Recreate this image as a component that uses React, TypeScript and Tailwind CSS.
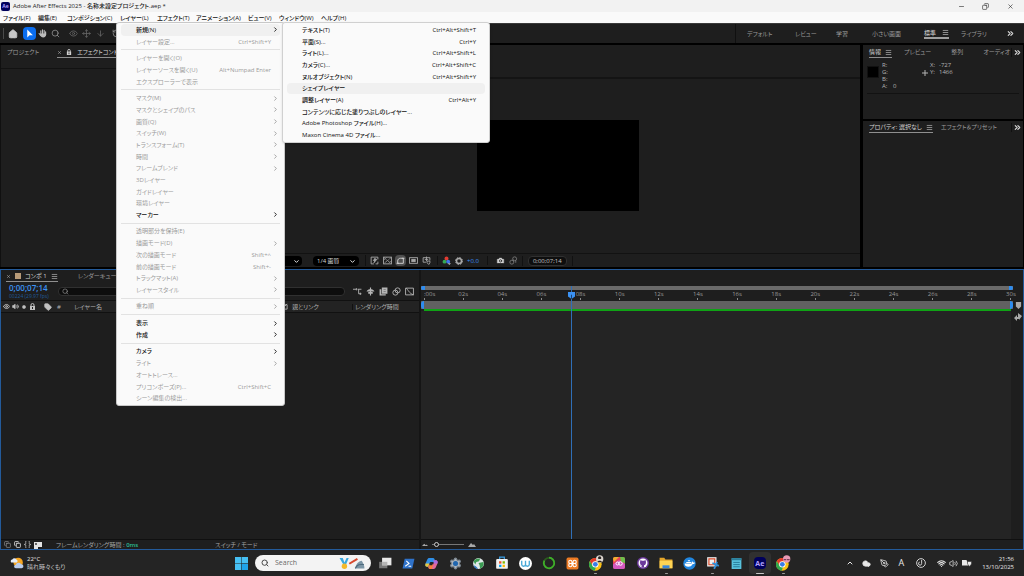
import { Fragment, type ReactNode } from 'react'
import {
  Camera,
  ChevronDown,
  ChevronRight,
  ChevronUp,
  ChevronsRight,
  Circle,
  Cloud,
  Copy,
  Eye,
  Home,
  Menu as MenuIcon,
  Minus,
  Move,
  ArrowDown,
  PenTool,
  RotateCcw,
  Search,
  Settings,
  Tag,
  Volume2,
  Wifi,
  X,
} from 'lucide-react'

interface MenuEntry {
  label: string
  shortcut?: string
  sub?: boolean
  enabled?: boolean
  active?: boolean
}

const layerMenu: MenuEntry[][] = [
  [
    { label: '新規(N)', sub: true, enabled: true, active: true },
    { label: 'レイヤー設定...', shortcut: 'Ctrl+Shift+Y' },
  ],
  [
    { label: 'レイヤーを開く(O)' },
    { label: 'レイヤーソースを開く(U)', shortcut: 'Alt+Numpad Enter' },
    { label: 'エクスプローラーで表示' },
  ],
  [
    { label: 'マスク(M)', sub: true },
    { label: 'マスクとシェイプのパス', sub: true },
    { label: '画質(Q)', sub: true },
    { label: 'スイッチ(W)', sub: true },
    { label: 'トランスフォーム(T)', sub: true },
    { label: '時間', sub: true },
    { label: 'フレームブレンド', sub: true },
    { label: '3Dレイヤー' },
    { label: 'ガイドレイヤー' },
    { label: '環境レイヤー' },
    { label: 'マーカー', sub: true, enabled: true },
  ],
  [
    { label: '透明部分を保持(E)' },
    { label: '描画モード(D)', sub: true },
    { label: '次の描画モード', shortcut: 'Shift+^' },
    { label: '前の描画モード', shortcut: 'Shift+-' },
    { label: 'トラックマット(A)', sub: true },
    { label: 'レイヤースタイル', sub: true },
  ],
  [{ label: '重ね順', sub: true }],
  [
    { label: '表示', sub: true, enabled: true },
    { label: '作成', sub: true, enabled: true },
  ],
  [
    { label: 'カメラ', sub: true, enabled: true },
    { label: 'ライト', sub: true },
    { label: 'オートトレース...' },
    { label: 'プリコンポーズ(P)...', shortcut: 'Ctrl+Shift+C' },
    { label: 'シーン編集の検出...' },
  ],
]

const newMenu: MenuEntry[] = [
  { label: 'テキスト(T)', shortcut: 'Ctrl+Alt+Shift+T', enabled: true },
  { label: '平面(S)...', shortcut: 'Ctrl+Y', enabled: true },
  { label: 'ライト(L)...', shortcut: 'Ctrl+Alt+Shift+L', enabled: true },
  { label: 'カメラ(C)...', shortcut: 'Ctrl+Alt+Shift+C', enabled: true },
  { label: 'ヌルオブジェクト(N)', shortcut: 'Ctrl+Alt+Shift+Y', enabled: true },
  { label: 'シェイプレイヤー', enabled: true, active: true },
  { label: '調整レイヤー(A)', shortcut: 'Ctrl+Alt+Y', enabled: true },
  { label: 'コンテンツに応じた塗りつぶしのレイヤー...', enabled: true },
  { label: 'Adobe Photoshop ファイル(H)...', enabled: true },
  { label: 'Maxon Cinema 4D ファイル...', enabled: true },
]

const menuBar = [
  { label: 'ファイル(F)', width: 'w-[35px]' },
  { label: '編集(E)', width: 'w-[29px]' },
  { label: 'コンポジション(C)', width: 'w-[53px]' },
  { label: 'レイヤー(L)', width: 'w-[37px]' },
  { label: 'エフェクト(T)', width: 'w-[39px]' },
  { label: 'アニメーション(A)', width: 'w-[52px]' },
  { label: 'ビュー(V)', width: 'w-[31px]' },
  { label: 'ウィンドウ(W)', width: 'w-[42px]' },
  { label: 'ヘルプ(H)', width: 'w-[30px]' },
]

const seconds = Array.from({ length: 16 }, (_, i) => i * 2)
const playhead = 7.5

function MenuRow({ item }: { item: MenuEntry }) {
  return (
    <li className="flex min-h-0 flex-1 px-1">
      <button
        className={`flex w-full items-center justify-between rounded-sm pr-[9px] pl-[15px] ${item.enabled ? 'font-medium text-[#111]' : 'text-[#9a9a9a]'} ${item.active ? 'bg-[#f0f0f0]' : ''}`}
      >
        <span>{item.label}</span>
        {item.shortcut && <span>{item.shortcut}</span>}
        {item.sub && <ChevronRight className="-mr-2 size-[7px]" strokeWidth={3} />}
      </button>
    </li>
  )
}

function Tab({ children, active = false, className = '' }: { children: ReactNode; active?: boolean; className?: string }) {
  return (
    <button
      className={`flex h-[11px] shrink-0 items-center gap-1 border-b ${active ? 'border-[#8f8f8f] text-[#d2d2d2]' : 'border-transparent text-[#9b9b9b]'} ${className}`}
    >
      {children}
      {active && <MenuIcon className="size-[7px]" />}
    </button>
  )
}

function Overflow() {
  return (
    <button aria-label="more" className="shrink-0 text-[#d8d8d8]">
      <ChevronsRight className="size-[9px]" strokeWidth={3} />
    </button>
  )
}

function LockIcon({ className = '' }: { className?: string }) {
  return (
    <svg viewBox="0 0 12 14" className={className}>
      <path d="M3 7V4a3 3 0 0 1 6 0v3" fill="none" stroke="currentColor" strokeWidth="2" />
      <path d="M1 6h10v8H1z" fill="currentColor" />
      <path d="M5 8h2v4H5z" fill="#1e1e1e" />
    </svg>
  )
}

function Layers() {
  return (
    <nav className="absolute top-[22px] left-[116px] z-20 flex h-[384px] w-[169px] flex-col rounded-[3px] border border-[#c8c8c8] bg-[#fafafa] py-px text-[6px]">
      {layerMenu.map((group, i) => (
        <Fragment key={i}>
          {i > 0 && <hr className="my-[2px] mr-1 ml-1 border-[#e2e2e2]" />}
          <ul className="flex flex-col" style={{ flex: group.length }}>
            {group.map((item) => (
              <MenuRow key={item.label} item={item} />
            ))}
          </ul>
        </Fragment>
      ))}
    </nav>
  )
}

function NewLayerMenu() {
  return (
    <nav className="absolute top-[22px] left-[282px] z-30 flex h-[121px] w-[208px] flex-col rounded-[3px] border border-[#d0d0d0] bg-[#fafafa] py-px text-[6px] shadow-sm">
      <ul className="flex flex-1 flex-col">
        {newMenu.map((item) => (
          <MenuRow key={item.label} item={item} />
        ))}
      </ul>
    </nav>
  )
}

function Toolbar() {
  return (
    <div className="flex h-5 shrink-0 items-center border-t border-[#3a3a3a] bg-[#1e1e1e] text-[#9a9a9a]">
      <div className="flex flex-1 items-center">
        <span className="ml-[3px] h-[11px] w-px bg-[#4a4a4a]" />
        <button aria-label="home" className="ml-1 text-[#c8c8c8]">
          <Home className="size-[10px]" fill="currentColor" />
        </button>
        <button aria-label="select" className="ml-[5px] rounded-sm bg-[#0b6ef0] p-[2px] text-white">
          <svg viewBox="0 0 16 16" className="size-[9px]" fill="currentColor">
            <path d="M4 1v14l4-4h6z" />
          </svg>
        </button>
        <button aria-label="hand" className="ml-[2px] text-[#bdbdbd]">
          <svg viewBox="0 0 16 16" className="size-[9px]" fill="none" stroke="currentColor" strokeWidth="2" strokeLinecap="round">
            <path d="M5 3v6M8 1.500V9M11 2.500V9M13.500 5v5M2 8l3 4" />
            <path d="M5 9h8.500c0 4-2 5-4.500 5s-3.500-2-4-4z" fill="currentColor" />
          </svg>
        </button>
        <button aria-label="zoom" className="ml-1">
          <Search className="size-[9px]" />
        </button>
        <button aria-label="orbit" className="ml-[9px] text-[#6a6a6a]">
          <Eye className="size-[9px]" />
        </button>
        <button aria-label="pan" className="ml-1 text-[#6a6a6a]">
          <Move className="size-[9px]" />
        </button>
        <button aria-label="dolly" className="ml-[5px] text-[#6a6a6a]">
          <ArrowDown className="size-[9px]" />
        </button>
        <button aria-label="rotate" className="ml-[7px]">
          <RotateCcw className="size-[9px]" />
        </button>
        <button aria-label="pen" className="ml-2">
          <PenTool className="size-[9px]" />
        </button>
      </div>
      <div className="flex h-full w-[289px] items-center border-l border-[#101010] pl-[11px] text-[6px]">
        <button className="w-12 text-left">デフォルト</button>
        <button className="w-[41px] text-left">レビュー</button>
        <button className="w-9 text-left">学習</button>
        <button className="w-[52px] text-left">小さい画面</button>
        <button className="mr-3 flex h-[11px] w-[25px] items-center justify-between border-b-2 border-[#a0a0a0] text-[#dedede]">
          標準
          <MenuIcon className="size-[7px]" />
        </button>
        <button className="flex-1 text-left">ライブラリ</button>
        <span className="mr-[9px] flex">
          <Overflow />
        </span>
      </div>
    </div>
  )
}

function CompositionPanel() {
  return (
    <section className="flex min-w-0 flex-1 flex-col bg-[#1e1e1e]">
      <div className="h-[34px] border-b-2 border-[#141414]" />
      <div className="flex flex-1 items-center justify-center pb-px">
        <div className="h-[91px] w-[162px] bg-black" />
      </div>
      <div className="flex h-[14px] items-center border-t border-[#121212] pl-2 text-[#a8a8a8]">
        <label className="relative flex w-[38px]">
          <select aria-label="magnification" className="h-[10px] w-full appearance-none rounded-sm bg-black pl-1 text-[6px] leading-none">
            <option>50%</option>
          </select>
          <ChevronDown className="absolute top-[2px] right-[2px] size-[7px] text-white" strokeWidth={3} />
        </label>
        <label className="relative ml-[11px] flex w-[46px]">
          <select aria-label="resolution" className="h-[10px] w-full appearance-none rounded-sm bg-black pl-1 text-[6px] leading-none text-[#d6d6d6]">
            <option>1/4 画質</option>
          </select>
          <ChevronDown className="absolute top-[2px] right-[3px] size-[7px] text-white" strokeWidth={3} />
        </label>
        <div className="ml-[6px] flex items-center gap-[2px] border-l border-[#111] pl-[3px]">
          <button aria-label="fast preview" className="grid size-[11px] place-items-center">
            <svg viewBox="0 0 16 16" className="size-[9px]" fill="none" stroke="currentColor" strokeWidth="1.6">
              <path d="M14 6V2H2v12h5" />
              <path d="M9 4 6 8h3l-2 4 5-6H9z" fill="currentColor" />
              <path d="M10 14h4v-4" />
            </svg>
          </button>
          <button aria-label="transparency" className="grid size-[11px] place-items-center">
            <svg viewBox="0 0 16 16" className="size-[9px]" fill="none" stroke="currentColor" strokeWidth="1.6">
              <rect x="1" y="2" width="14" height="12" />
              <path d="m2 3 12 10M14 3 2 13M6 3l-4 4M10 13l4-4" strokeDasharray="2 1" />
            </svg>
          </button>
          <button aria-label="mask" className="grid size-[11px] place-items-center rounded-sm bg-[#505050] text-[#d8d8d8]">
            <svg viewBox="0 0 16 16" className="size-[9px]" fill="none" stroke="currentColor" strokeWidth="1.6">
              <path d="M3 13V9c0-3 2-5 5-5h5v9zM1 13h4M11 4h4" />
            </svg>
          </button>
          <button aria-label="region" className="grid size-[11px] place-items-center">
            <svg viewBox="0 0 16 16" className="size-[9px]" fill="none" stroke="currentColor" strokeWidth="1.6">
              <rect x="1" y="3" width="14" height="10" />
              <rect x="5" y="6" width="6" height="4" fill="currentColor" />
            </svg>
          </button>
          <button aria-label="guides" className="grid size-[11px] place-items-center">
            <svg viewBox="0 0 16 16" className="size-[9px]" fill="none" stroke="currentColor" strokeWidth="1.6">
              <path d="M7 11H2V3h12v5M8 1v8M5 6h6M9 9h5v3l-2 3-3-3z" />
            </svg>
          </button>
        </div>
        <div className="ml-[5px] flex items-center gap-1 border-l border-[#111] pl-1">
          <svg viewBox="0 0 16 16" className="size-[9px]">
            <circle cx="8" cy="4.500" r="3.500" fill="#e23b32" />
            <circle cx="4.500" cy="10" r="3.500" fill="#35a853" />
            <circle cx="11" cy="10" r="3.500" fill="#3f74e8" />
            <path d="M10 13h6l-3 3z" fill="#bbb" />
          </svg>
          <svg viewBox="0 0 16 16" className="size-[8px]" fill="none" stroke="currentColor">
            <circle cx="8" cy="8" r="5" strokeWidth="3" />
            <circle cx="8" cy="8" r="7" strokeWidth="2" strokeDasharray="3 2.500" />
          </svg>
          <button className="text-[6px] text-[#3b93f5]">+0.0</button>
        </div>
        <div className="ml-2 flex items-center gap-1 border-l border-[#111] pl-2">
          <Camera className="size-[9px] text-[#d0d0d0]" fill="currentColor" stroke="#1e1e1e" />
          <svg viewBox="0 0 16 16" className="size-[9px] text-[#777]" fill="none" stroke="currentColor" strokeWidth="1.600">
            <circle cx="10" cy="5" r="3.500" />
            <circle cx="5" cy="11" r="3.500" />
            <path d="m7 8 2-1M12 8v4" />
          </svg>
        </div>
        <div className="ml-1 border-x border-[#111] px-[5px]">
          <button className="block h-[10px] rounded-sm border border-[#303030] bg-[#0e0e0e] px-1 text-[6px] leading-none text-[#c6c6c6]">
            0;00;07;14
          </button>
        </div>
      </div>
    </section>
  )
}

function SidePanels() {
  return (
    <aside className="flex w-[161px] shrink-0 flex-col gap-[2px] pr-px text-[6px]">
      <section className="flex h-[74px] flex-col bg-[#1e1e1e]">
        <div className="flex items-center pt-[2px] pl-[6px]">
          <Tab active className="mr-3">情報</Tab>
          <Tab className="mr-5">プレビュー</Tab>
          <Tab className="mr-5">整列</Tab>
          <Tab className="flex-1">オーディオ</Tab>
          <span className="mr-px flex border-l border-[#101010] pl-px">
            <Overflow />
          </span>
        </div>
        <div className="mx-1 flex flex-1 text-[#b4b4b4]">
          <div className="mt-2 size-3 border border-[#111] bg-black" />
          <dl className="mt-1 ml-[3px] grid w-10 auto-rows-[7px] grid-cols-[7px_1fr] leading-[7px]">
            <dt>R:</dt>
            <dd />
            <dt>G:</dt>
            <dd />
            <dt>B:</dt>
            <dd />
            <dt>A:</dt>
            <dd className="pl-1">0</dd>
          </dl>
          <div className="flex flex-1 leading-[7px]">
            <svg viewBox="0 0 6 6" className="mt-3 size-[6px] self-start" stroke="currentColor">
              <path d="M3 0v6M0 3h6" />
            </svg>
            <dl className="mt-1 ml-[2px] grid auto-rows-[7px] grid-cols-[9px_1fr]">
              <dt>X:</dt>
              <dd>-727</dd>
              <dt>Y:</dt>
              <dd>1466</dd>
            </dl>
          </div>
        </div>
        <div className="mx-1 h-[26px] border-t border-[#121212]" />
      </section>
      <section className="flex-1 bg-[#1e1e1e]">
        <div className="flex items-center pt-px pl-[6px]">
          <Tab active className="mr-2">プロパティ: 選択なし</Tab>
          <Tab className="flex-1">エフェクト＆プリセット</Tab>
          <span className="mr-px flex border-l border-[#101010] pl-px">
            <Overflow />
          </span>
        </div>
      </section>
    </aside>
  )
}

function TimelineLeft() {
  return (
    <div className="flex w-[420px] shrink-0 flex-col border-r-2 border-[#151515]">
      <div className="flex h-[13px] items-center pl-[5px] text-[6px]">
        <Tab active className="mr-5">
          <X className="size-[5px]" />
          <span className="size-[6px] bg-[#b79a78]" />
          <span>コンポ 1</span>
        </Tab>
        <Tab>レンダーキュー</Tab>
      </div>
      <div className="flex h-[17px] items-center">
        <div className="w-[57px] pl-2">
          <div className="text-[8px] leading-[9px] font-semibold text-[#3b93f5]">0;00;07;14</div>
          <div className="text-[5px] leading-[8px] text-[#1f5a9c]">00224 (29.97 fps)</div>
        </div>
        <label className="flex h-[9px] w-[287px] items-center gap-1 rounded-sm border border-[#303030] bg-[#0d0d0d] pl-[3px] text-[#a8a8a8]">
          <Search className="size-[7px]" />
          <input aria-label="search layers" className="w-full bg-transparent text-[6px] outline-none" />
        </label>
        <div className="flex flex-1 items-center justify-between pr-[5px] pl-2 text-[#b5b5b5]">
          <svg viewBox="0 0 16 16" className="size-[9px]" fill="none" stroke="currentColor" strokeWidth="1.600">
            <path d="M0 4h6M8 4h7M6 2v4M10 4v8h5M13 10v4" />
          </svg>
          <svg viewBox="0 0 16 16" className="size-[9px]" fill="currentColor">
            <path d="M1 8c1-3 4-4 7-4s6 1 7 4zM7 1h2v14H7zM4 9h3v3H4zM9 9h3v3H9z" />
          </svg>
          <svg viewBox="0 0 16 16" className="size-[9px]" fill="currentColor">
            <path d="M5 1h10v11H5zM1 4h3v9h8v2H1z" />
            <path d="M8 4h4v1H8zM8 8h4v1H8z" fill="#555" />
          </svg>
          <svg viewBox="0 0 16 16" className="size-[9px]" fill="none" stroke="currentColor" strokeWidth="1.600">
            <circle cx="10" cy="6" r="4.500" />
            <circle cx="6" cy="10" r="4.500" />
          </svg>
          <svg viewBox="0 0 16 16" className="size-[9px]" fill="none" stroke="currentColor" strokeWidth="1.600">
            <path d="M1 2h14v12H1zM2 2c3 2 5 9 13 12" />
          </svg>
        </div>
      </div>
      <div className="flex h-[13px] items-center border-y border-[#111] bg-[#232323] text-[6px] text-[#b0b0b0]">
        <div className="flex w-[43px] items-center gap-[2px] pl-[2px] text-[#c0c0c0]">
          <Eye className="size-[7px]" strokeWidth={3} />
          <Volume2 className="size-[7px]" fill="currentColor" />
          <Circle className="mx-px size-[4px]" fill="currentColor" />
          <LockIcon className="size-[7px]" />
        </div>
        <Tag className="size-[8px] text-[#c0c0c0]" fill="currentColor" />
        <span className="ml-[5px] w-[17px]">#</span>
        <span className="w-[207px] text-left">レイヤー名</span>
        <svg viewBox="0 0 8 8" className="mr-1 size-[7px]" fill="none" stroke="currentColor">
          <path d="M1 2h6v5H1zM4 2v2l3-3" />
        </svg>
        <span className="w-[60px]">親とリンク</span>
        <span className="border-l border-[#111] pl-[2px]">レンダリング時間</span>
      </div>
      <div className="flex-1" />
      <div className="flex h-[10px] items-center border-t border-[#101010] text-[6px] text-[#a5a5a5]">
        <div className="flex w-[55px] items-center gap-[3px] pl-[3px]">
          <Copy className="size-[7px]" />
          <Copy className="size-[7px] text-[#d4d4d4]" strokeWidth={3} />
          <svg viewBox="0 0 8 8" className="size-[7px]" fill="none" stroke="currentColor">
            <path d="M3 0Q1 0 2 2t-2 2q3 0 2 2t1 2M5 0q2 0 1 2t2 2Q5 4 6 6T5 8" />
          </svg>
          <svg viewBox="0 0 8 8" className="size-[8px]" fill="#e4e4e4">
            <path d="M0 1h8v5H4v2H0z" />
            <path d="M1 2h2v2H1z" fill="#666" />
          </svg>
        </div>
        <span className="w-[159px]">
          フレームレンダリング時間 : <b className="font-semibold text-[#2bbd95]">0ms</b>
        </span>
        <button className="text-left">スイッチ / モード</button>
      </div>
    </div>
  )
}

function TimelineRight() {
  return (
    <div className="flex min-w-0 flex-1 flex-col">
      <div className="relative mr-[10px] flex flex-1 flex-col pt-4">
        <div className="flex h-1 items-center bg-[#6a6a6a]">
          <span className="h-full w-1 rounded-l-full bg-[#2d8cf0]" />
          <span className="ml-auto h-full w-1 rounded-r-full bg-[#2d8cf0]" />
        </div>
        <div className="mr-[2px] ml-[3px] flex h-[11px] justify-between text-[6px] leading-[8px] text-[#9a9a9a]">
          {seconds.map((s) => (
            <span key={s} className={`flex w-0 flex-col whitespace-nowrap ${s === 0 ? 'items-start' : 'items-center'}`}>
              {s === 0 ? ':00s' : `${String(s).padStart(2, '0')}s`}
              <i className="h-[2px] w-px bg-[#8a8a8a]" />
            </span>
          ))}
        </div>
        <div className="flex h-2 justify-between bg-[#616161]">
          <span className="w-[3px] rounded-l-sm bg-[#2d8cf0]" />
          <span className="w-[3px] rounded-r-sm bg-[#2d8cf0]" />
        </div>
        <div className="mr-[2px] ml-[3px] h-[2px] bg-[#0fa315]" />
        <div className="mr-[2px] flex-1 bg-[#242424]" />
        <div className="absolute inset-y-0 right-[2px] left-[3px]">
          <div className="absolute top-4 bottom-0 w-px bg-[#2f6fb8]" style={{ left: `${(playhead / 30) * 100}%` }}>
            <svg viewBox="0 0 8 8" className="absolute top-[6px] -left-[3px] size-[7px]">
              <path d="M0 0h8v5L4 8 0 5z" fill="#3b93f5" />
              <path d="M3.500 3v5h1V3z" fill="#123a66" />
            </svg>
          </div>
        </div>
        <div className="absolute top-8 -right-[9px] flex flex-col items-center gap-1 text-[#a9a9a9]">
          <svg viewBox="0 0 8 8" className="size-[7px]" fill="currentColor">
            <path d="M1 0h6v5L4 8 1 5z" />
          </svg>
          <svg viewBox="0 0 8 8" className="size-[8px]" fill="currentColor">
            <path d="M0 5 3 2v2h1V0l4 3-3 4V6H3v2z" />
          </svg>
        </div>
      </div>
      <div className="flex h-[10px] items-center gap-1 border-t border-[#101010] text-[#a8a8a8]">
        <svg viewBox="0 0 8 4" className="ml-px h-[3px] w-[6px]" fill="currentColor">
          <path d="M0 4 3 1l2 2 1-1 2 2z" />
        </svg>
        <input type="range" aria-label="timeline zoom" defaultValue={6} className="h-px w-[32px] appearance-none bg-[#777] [&::-webkit-slider-thumb]:size-[5px] [&::-webkit-slider-thumb]:appearance-none [&::-webkit-slider-thumb]:rounded-full [&::-webkit-slider-thumb]:border [&::-webkit-slider-thumb]:border-[#ccc] [&::-webkit-slider-thumb]:bg-[#1e1e1e]" />
        <svg viewBox="0 0 8 4" className="h-1 w-2" fill="currentColor">
          <path d="M0 4 3 0l2 2 1-1 2 3z" />
        </svg>
      </div>
    </div>
  )
}

function Chrome({ badge }: { badge: 'dark' | 'pink' }) {
  return (
    <svg viewBox="0 0 24 24" className="size-4">
      <circle cx="11" cy="14" r="9.500" fill="#fbc116" />
      <path d="M2.800 9.200A9.500 9.500 0 0 1 19.200 9.200L11 9.500 7 16z" fill="#e5392c" />
      <path d="M2.800 9.200 7 16.500 12 18l-2 5.500A9.500 9.500 0 0 1 2.800 9.200z" fill="#2da94f" />
      <circle cx="11" cy="14" r="4.800" fill="#fff" />
      <circle cx="11" cy="14" r="3.600" fill="#3a7de8" />
      <circle cx="17.500" cy="6" r="5.500" fill={badge === 'dark' ? '#ddd6d0' : '#e89ab5'} />
      <path
        d={badge === 'dark' ? 'M15 5c0-4 5-4 5 0l-1 1h-3zM14 11c0-3 7-3 7 0z' : 'M13 6h4v2h-4zM18 6h4v2h-4z'}
        fill={badge === 'dark' ? '#2a2422' : '#7a3f5c'}
      />
    </svg>
  )
}

const taskbarApps: { name: string; running?: boolean; active?: boolean; icon: ReactNode }[] = [
  {
    name: 'Task view',
    icon: (
      <svg viewBox="0 0 24 24" className="size-[14px]">
        <path d="M2 10h14v11H2z" fill="#777" />
        <path d="M7 3h16v13H7z" fill="#e8e8e8" />
        <path d="M7 10h9v6H7z" fill="#b5b5b5" />
      </svg>
    ),
  },
  {
    name: 'PowerShell',
    icon: (
      <svg viewBox="0 0 24 24" className="size-[13px]">
        <path d="M5 3h18l-4 18H1z" fill="#2f72c9" />
        <path d="m8 7 5 5-7 5M12 17h5" fill="none" stroke="#fff" strokeWidth="2" />
      </svg>
    ),
  },
  {
    name: 'Copilot',
    icon: (
      <svg viewBox="0 0 24 24" className="size-[13px]">
        <path d="M8 2h7c2 0 3 2 3 4l-2 4H9l-3 8H4c-3 0-4-3-3-6l3-7c1-2 2-3 4-3z" fill="#2f8fe8" />
        <path d="M1 12h7l-2 6H4c-4 0-4-3-3-6z" fill="#e8c83a" />
        <path d="M16 22H9c-2 0-3-2-3-4l2-4h7l3-8h2c3 0 4 3 3 6l-3 7c-1 2-2 3-4 3z" fill="#e2679a" />
        <path d="M8 14h7l-2 8H9c-3 0-3-4-1-8z" fill="#f5803a" />
        <path d="M15 6h5c3 0 4 3 3 6h-6z" fill="#a86ae0" />
        <path d="m10 9h5l-2 6H8z" fill="#242424" />
      </svg>
    ),
  },
  {
    name: 'Settings',
    icon: (
      <span className="relative grid place-items-center">
        <Settings className="size-[13px] text-[#7d8791]" fill="#aab3bb" />
        <span className="absolute size-[5px] rounded-full bg-[#1f66b0]" />
      </span>
    ),
  },
  {
    name: 'Earth',
    icon: (
      <svg viewBox="0 0 24 24" className="size-[13px]">
        <circle cx="12" cy="12" r="10" fill="#dfe8e8" />
        <path d="M3 8c3-5 8-6 12-5l-2 5-5 1-2 5zM12 11l9-2c2 6-2 11-6 12l-1-6z" fill="#3a9a52" />
        <path d="M3 15c3 1 6 3 8 7-4 0-7-3-8-7z" fill="#2e78c4" />
      </svg>
    ),
  },
  {
    name: 'Store',
    icon: (
      <svg viewBox="0 0 24 24" className="size-[14px]">
        <path d="M8 6V2h8v4" fill="none" stroke="#3aa0e8" strokeWidth="2" />
        <rect x="2" y="5" width="20" height="17" rx="2" fill="#f2f2f2" />
        <path d="M7 9h4v4H7z" fill="#f25022" />
        <path d="M13 9h4v4h-4z" fill="#7fba00" />
        <path d="M7 15h4v4H7z" fill="#00a4ef" />
        <path d="M13 15h4v4h-4z" fill="#ffb900" />
      </svg>
    ),
  },
  {
    name: 'W',
    icon: (
      <svg viewBox="0 0 24 24" className="size-[13px]">
        <circle cx="12" cy="12" r="12" fill="#fff" />
        <path d="M5 7v7q0 3 3.500 3t3.500-3V7v7q0 3 3.500 3t3.500-3V7" fill="none" stroke="#48a9d8" strokeWidth="2.500" />
      </svg>
    ),
  },
  {
    name: 'Ring',
    icon: (
      <svg viewBox="0 0 24 24" className="size-[14px]" fill="none" strokeWidth="3">
        <circle cx="12" cy="12" r="9" stroke="#2c5c1f" />
        <path d="M12 3a9 9 0 1 1-8 5" stroke="#3fae2a" />
      </svg>
    ),
  },
  {
    name: 'XAMPP',
    icon: (
      <svg viewBox="0 0 24 24" className="size-[13px]">
        <rect x="1" y="1" width="22" height="22" rx="3" fill="#ec7a23" />
        <path d="M11 12H8q-3 0-3-3t3-3 3 3v6q0 3-3 3t-3-3 3-3M13 12h3q3 0 3-3t-3-3-3 3v6q0 3 3 3t3-3-3-3M10 12h4" fill="none" stroke="#fff" strokeWidth="2" />
      </svg>
    ),
  },
  { name: 'Chrome', running: true, icon: <Chrome badge="dark" /> },
  {
    name: 'Creative Cloud',
    icon: (
      <svg viewBox="0 0 24 24" className="size-[12px]">
        <rect width="24" height="24" rx="4" fill="#e8425a" />
        <path d="M0 15 12 6l12 8v6a4 4 0 0 1-4 4H4a4 4 0 0 1-4-4z" fill="#d458c0" />
        <path d="M14 0h6a4 4 0 0 1 4 4v9l-8-4z" fill="#6ec04a" />
        <path d="M0 4a4 4 0 0 1 4-4h8L2 10z" fill="#f0b030" />
        <circle cx="9" cy="13" r="3" fill="none" stroke="#fff" strokeWidth="2" />
        <circle cx="15" cy="13" r="3.500" fill="none" stroke="#fff" strokeWidth="2" />
      </svg>
    ),
  },
  {
    name: 'GitHub Desktop',
    icon: (
      <svg viewBox="0 0 24 24" className="size-[12px]">
        <circle cx="12" cy="12" r="12" fill="#6c3a9c" />
        <circle cx="12" cy="12" r="9" fill="#fff" />
        <path d="M7 6l3 1.500h4L17 6l1 4c0 5-2 6-4 6.500V21h-4v-2c-2 0-3-1-4-2l4 .500v-1C7 16 6 15 6 10z" fill="#6c3a9c" />
      </svg>
    ),
  },
  {
    name: 'Explorer',
    running: true,
    icon: (
      <svg viewBox="0 0 24 24" className="size-[14px]">
        <path d="M1 3h8l2 3h12v15H1z" fill="#e5a62a" />
        <path d="M1 8h22v13H1z" fill="#ffd454" />
        <path d="M6 16h12v5H6z" fill="#3c86d8" />
      </svg>
    ),
  },
  {
    name: 'Docker',
    icon: (
      <svg viewBox="0 0 24 24" className="size-[13px]">
        <circle cx="12" cy="12" r="11.500" fill="#2186e0" />
        <path d="M3 12h13c0-2 0-3 1-4l2 2h3c0 2-2 3-4 3-2 4-5 5-8 5-4 0-7-2-7-6zM6 9h9v2H6zM9 6h4v2H9z" fill="#fff" />
      </svg>
    ),
  },
  {
    name: 'Snipping Tool',
    running: true,
    icon: (
      <svg viewBox="0 0 24 24" className="size-[14px]">
        <path d="M2 2h16v16H2z" fill="#f0f0f0" />
        <path d="M5 5h10v10H5z" fill="none" stroke="#d84a2a" strokeWidth="2" />
        <path d="m11 12 11 5M14 22l5-12" stroke="#2f8fd8" strokeWidth="3" />
      </svg>
    ),
  },
  {
    name: 'Notepad',
    icon: (
      <svg viewBox="0 0 24 24" className="size-[13px]">
        <rect x="3" y="2" width="18" height="20" rx="1" fill="#58c2dc" />
        <path d="M3 2h18v4H3z" fill="#2b7f9c" />
        <path d="M6 10h12M6 14h12M6 18h12" stroke="#1d6f8c" strokeWidth="1.500" />
      </svg>
    ),
  },
  {
    name: 'After Effects',
    running: true,
    active: true,
    icon: (
      <span className="grid size-[12px] place-items-center rounded-sm bg-[#00005b] text-[7px] leading-none font-bold text-[#b3a4ff]">Ae</span>
    ),
  },
  { name: 'Chrome profile', running: true, icon: <Chrome badge="pink" /> },
]

function Taskbar() {
  return (
    <footer className="grid h-[26px] shrink-0 grid-cols-[1fr_auto_1fr] items-center bg-[#242424] text-[6px] leading-[8px] text-[#e8e8e8]">
      <button className="flex items-center gap-[3px] pl-[10px] text-left">
        <svg viewBox="0 0 24 24" className="size-[14px]">
          <circle cx="14" cy="11" r="8" fill="#f5a623" />
          <path d="M2 11a3 3 0 0 1 2-5 4 4 0 0 1 7 0 3 3 0 0 1 1 5z" fill="#e4edf9" />
          <path d="M10 21a3 3 0 0 1 0-6 5 5 0 0 1 9-1 3.500 3.500 0 0 1 1 7z" fill="#b9cdee" />
        </svg>
        <span>
          22°C
          <br />
          <span className="text-[#c4c4c4]">晴れ時々くもり</span>
        </span>
      </button>
      <div className="flex items-center">
        <button aria-label="Start" className="grid w-6 place-items-center">
          <svg viewBox="0 0 24 24" className="size-[13px]" fill="#46c0f4">
            <path d="M0 0h11.500v11.500H0zM12.500 0H24v11.500H12.500zM0 12.500h11.500V24H0z" />
            <path d="M12.500 12.500H24V24H12.500z" fill="#1fa4ea" />
          </svg>
        </button>
        <label className="mx-[2px] flex h-4 w-[116px] items-center gap-[6px] rounded-full bg-[#f3f3f3] px-[6px] text-[#4a4a4a]">
          <Search className="size-[8px] shrink-0" strokeWidth={3} />
          <input aria-label="Search" placeholder="Search" className="w-full min-w-0 bg-transparent text-[7px] outline-none placeholder:text-[#6a6a6a]" />
          <svg viewBox="0 0 48 24" className="h-[13px] w-[26px] shrink-0">
            <path d="M1 2h6l3 8 4-8h4l-5 12H8z" fill="#38a8e0" />
            <circle cx="10" cy="17" r="5" fill="#f4b92a" />
            <path d="m18 11 15-9 2 3-15 9z" fill="#d8492e" />
            <path d="M30 21c1-8 6-13 12-14 3 5 5 9 5 14z" fill="#7d96a6" />
            <path d="M30 21c4-7 8-8 16-7" stroke="#4e6a7c" strokeWidth="2" fill="none" />
          </svg>
        </label>
        <ul className="grid w-[422px] grid-cols-18">
          {taskbarApps.map((app) => (
            <li key={app.name} className="flex justify-center">
              <button aria-label={app.name} className={`relative grid h-[22px] w-[22px] place-items-center rounded-sm ${app.active ? 'bg-[#303030]' : ''}`}>
                {app.icon}
                {app.running && (
                  <span className={`absolute bottom-0 h-px rounded-full ${app.active ? 'w-2 bg-[#c8c8c8]' : 'w-[3px] bg-[#9a9a9a]'}`} />
                )}
              </button>
            </li>
          ))}
        </ul>
      </div>
      <div className="flex items-center justify-end pr-[10px]">
        <ChevronUp className="mr-2 size-[8px]" strokeWidth={3} />
        <Cloud className="mr-[9px] size-[9px]" fill="currentColor" />
        <PenTool className="mr-[9px] size-[9px]" />
        <span className="mr-3 text-[9px]">A</span>
        <svg viewBox="0 0 16 16" className="mr-[11px] size-[10px]" fill="none" stroke="currentColor" strokeWidth="1.400">
          <circle cx="8" cy="8" r="7" />
          <path d="M9 3v6a2.500 2.500 0 1 1-3-2.500" />
        </svg>
        <Wifi className="mr-[3px] size-[9px]" strokeWidth={3} />
        <Volume2 className="mr-1 size-[9px]" />
        <svg viewBox="0 0 20 16" className="mr-[10px] h-[8px] w-[10px]" fill="currentColor">
          <path d="M0 2h9l4 11H0z" />
          <path d="M11 5h8v5l-4 5-4-5z" stroke="#242424" />
        </svg>
        <span className="text-right">
          21:56
          <br />
          13/10/2025
        </span>
      </div>
    </footer>
  )
}

export default function App() {
  return (
    <div className="relative flex min-h-screen flex-col overflow-hidden bg-black font-['Open_Sans','Noto_Sans_CJK_JP',sans-serif] leading-none whitespace-nowrap [font-feature-settings:'palt']">
      {/* Title bar */}
      <header className="flex h-3 shrink-0 items-center bg-[#f2f2f2] pl-px text-[7px] text-[#222]">
        <span className="mr-[3px] grid size-[9px] place-items-center rounded-[2px] bg-[#00005b] text-[5px] font-bold text-[#b3a4ff]">Ae</span>
        <h1 className="flex-1 text-[6px] font-medium">Adobe After Effects 2025 - 名称未設定プロジェクト.aep *</h1>
        <button aria-label="minimize" className="mr-[17px]">
          <Minus className="size-[7px]" />
        </button>
        <button aria-label="restore" className="mr-[18px]">
          <Copy className="size-[7px] -scale-x-100" />
        </button>
        <button aria-label="close" className="mr-[10px]">
          <X className="size-[7px]" />
        </button>
      </header>
      <nav className="flex h-[11px] shrink-0 items-center bg-[#fafafa] pl-[3px] text-[6px] font-medium text-[#111]">
        {menuBar.map((item) => (
          <button key={item.label} className={`text-left ${item.width}`}>
            {item.label}
          </button>
        ))}
      </nav>
      <Layers />
      <NewLayerMenu />

      <Toolbar />

      {/* Upper panels */}
      <div className="mt-[2px] flex h-[222px] shrink-0 gap-[3px]">
        <section className="w-[253px] shrink-0 border-l border-[#101010] bg-[#1e1e1e]">
          <div className="flex h-6 border-b border-[#121212] pt-[2px] pl-[6px] text-[6px]">
            <Tab className="w-[50px]">プロジェクト</Tab>
            <Tab active>
              <X className="size-[5px]" />
              <LockIcon className="size-[6px]" />
              <span className="pl-px">エフェクトコントロール</span>
            </Tab>
          </div>
        </section>
        <CompositionPanel />
        <SidePanels />
      </div>

      {/* Timeline */}
      <section className="mt-[2px] flex flex-1 border border-[#235a9a] bg-[#1e1e1e]">
        <TimelineLeft />
        <TimelineRight />
      </section>
      <Taskbar />
    </div>
  )
}
